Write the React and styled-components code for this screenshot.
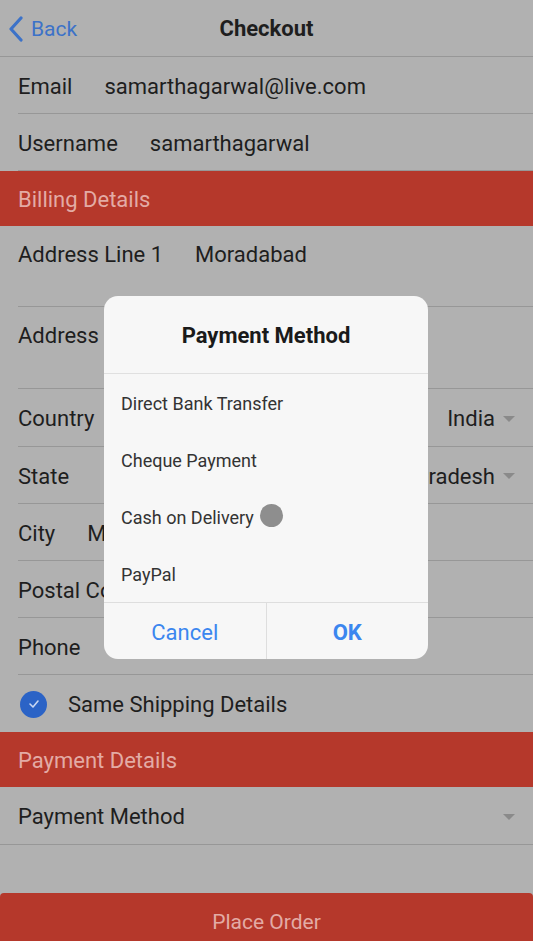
import React from "react";
import styled, { createGlobalStyle } from "styled-components";

const Global = createGlobalStyle`
  html, body { margin: 0; padding: 0; background: #ffffff; }
  body { font-family: Roboto, "Noto Sans", sans-serif; }
  * { box-sizing: border-box; }
`;

const Page = styled.div`
  position: relative;
  width: 533px;
  height: 941px;
  background: #b1b1b1;
  display: flex;
  flex-direction: column;
  overflow: hidden;
  color: #1e1e1e;
`;

const Header = styled.div`
  height: 57px;
  flex-shrink: 0;
  display: flex;
  align-items: center;
  position: relative;
  border-bottom: 1px solid #979797;
`;

const BackLink = styled.div`
  display: flex;
  align-items: center;
  gap: 8px;
  padding-left: 8px;
  padding-top: 1px;
  color: #3c72c8;
  font-size: 21px;
`;

const Title = styled.div`
  position: absolute;
  left: 0;
  right: 0;
  text-align: center;
  font-weight: 700;
  font-size: 22px;
  pointer-events: none;
`;

const Row = styled.div`
  height: ${(p) => p.$h || 57}px;
  flex-shrink: 0;
  margin-left: ${(p) => (p.$full ? 0 : 18)}px;
  padding-left: ${(p) => (p.$full ? 18 : 0)}px;
  padding-right: 18px;
  display: flex;
  align-items: ${(p) => (p.$top ? "flex-start" : "center")};
  padding-top: ${(p) => (p.$top ? 16 : 2)}px;
  gap: 32px;
  font-size: 22px;
  border-bottom: 1px solid #979797;
`;

const Value = styled.span`
  flex: ${(p) => (p.$fill ? 1 : "none")};
  text-align: ${(p) => (p.$right ? "right" : "left")};
`;

const Caret = styled.span`
  width: 0;
  height: 0;
  border-left: 6px solid transparent;
  border-right: 6px solid transparent;
  border-top: 6px solid #8a8a8a;
  margin-left: ${(p) => (p.$tight ? -24 : 0)}px;
  flex-shrink: 0;
`;

const Section = styled.div`
  height: 55px;
  flex-shrink: 0;
  background: #b5382b;
  color: #e3aba5;
  font-size: 22px;
  display: flex;
  align-items: center;
  padding-left: 18px;
  padding-top: 2px;
`;

const CheckRow = styled.div`
  height: 57px;
  flex-shrink: 0;
  display: flex;
  align-items: center;
  padding-left: 20px;
  padding-top: 1px;
  gap: 21px;
  font-size: 22px;
`;

const Check = styled.span`
  width: 27px;
  height: 27px;
  border-radius: 50%;
  background: #2b63c6;
  display: flex;
  align-items: center;
  justify-content: center;
`;

const Spacer = styled.div`
  flex: 1;
`;

const PlaceOrder = styled.div`
  height: 48px;
  flex-shrink: 0;
  background: #b5382b;
  border-radius: 4px 4px 0 0;
  color: #e3aba5;
  font-size: 21px;
  display: flex;
  align-items: center;
  justify-content: center;
  padding-top: 9px;
`;

const Dialog = styled.div`
  position: absolute;
  left: 104px;
  top: 296px;
  width: 324px;
  background: #f7f7f7;
  border-radius: 14px;
  overflow: hidden;
  display: flex;
  flex-direction: column;
`;

const DialogTitle = styled.div`
  height: 78px;
  display: flex;
  align-items: center;
  justify-content: center;
  font-weight: 700;
  font-size: 22px;
  color: #1a1a1a;
  border-bottom: 1px solid #e0e0e0;
  padding-top: 2px;
`;

const Option = styled.div`
  height: 57px;
  display: flex;
  align-items: center;
  gap: 6px;
  padding-left: 17px;
  padding-top: 2px;
  font-size: 18px;
  color: #333;
`;

const Ripple = styled.span`
  width: 23px;
  height: 23px;
  border-radius: 50%;
  background: #8e8e8e;
  margin-top: -5px;
`;

const Buttons = styled.div`
  display: flex;
  border-top: 1px solid #dedede;
  height: 57px;
`;

const DialogButton = styled.div`
  flex: 1;
  display: flex;
  align-items: center;
  justify-content: center;
  padding-top: 2px;
  color: #3b86ef;
  font-size: 22px;
  font-weight: ${(p) => (p.$bold ? 700 : 400)};
  & + & { border-left: 1px solid #dedede; }
`;

const options = ["Direct Bank Transfer", "Cheque Payment", "Cash on Delivery", "PayPal"];

export default function App() {
  return (
    <>
      <Global />
      <Page>
        <Header>
          <BackLink>
            <svg width="15" height="26" viewBox="0 0 15 26">
              <path d="M13 2 L3 13 L13 24" fill="none" stroke="#3c72c8" strokeWidth="3.2" strokeLinecap="round" strokeLinejoin="round" />
            </svg>
            Back
          </BackLink>
          <Title>Checkout</Title>
        </Header>
        <Row>
          <span>Email</span>
          <Value>samarthagarwal@live.com</Value>
        </Row>
        <Row>
          <span>Username</span>
          <Value>samarthagarwal</Value>
        </Row>
        <Section>Billing Details</Section>
        <Row $h={81} $top>
          <span>Address Line 1</span>
          <Value>Moradabad</Value>
        </Row>
        <Row $h={82} $top>
          <span>Address Line 2</span>
        </Row>
        <Row $h={58}>
          <span>Country</span>
          <Value $fill $right>India</Value>
          <Caret $tight />
        </Row>
        <Row>
          <span>State</span>
          <Value $fill $right>Uttar Pradesh</Value>
          <Caret $tight />
        </Row>
        <Row>
          <span>City</span>
          <Value>Moradabad</Value>
        </Row>
        <Row>
          <span>Postal Code</span>
        </Row>
        <Row>
          <span>Phone</span>
        </Row>
        <CheckRow>
          <Check>
            <svg width="12" height="10" viewBox="0 0 12 10">
              <path d="M2 5 L5 8 L10 2" fill="none" stroke="#c9d7f2" strokeWidth="1.6" strokeLinecap="round" strokeLinejoin="round" />
            </svg>
          </Check>
          Same Shipping Details
        </CheckRow>
        <Section>Payment Details</Section>
        <Row $full $h={58}>
          <Value $fill>Payment Method</Value>
          <Caret />
        </Row>
        <Spacer />
        <PlaceOrder>Place Order</PlaceOrder>

        <Dialog>
          <DialogTitle>Payment Method</DialogTitle>
          {options.map((o) => (
            <Option key={o}>
              {o}
              {o === "Cash on Delivery" && <Ripple />}
            </Option>
          ))}
          <Buttons>
            <DialogButton>Cancel</DialogButton>
            <DialogButton $bold>OK</DialogButton>
          </Buttons>
        </Dialog>
      </Page>
    </>
  );
}
